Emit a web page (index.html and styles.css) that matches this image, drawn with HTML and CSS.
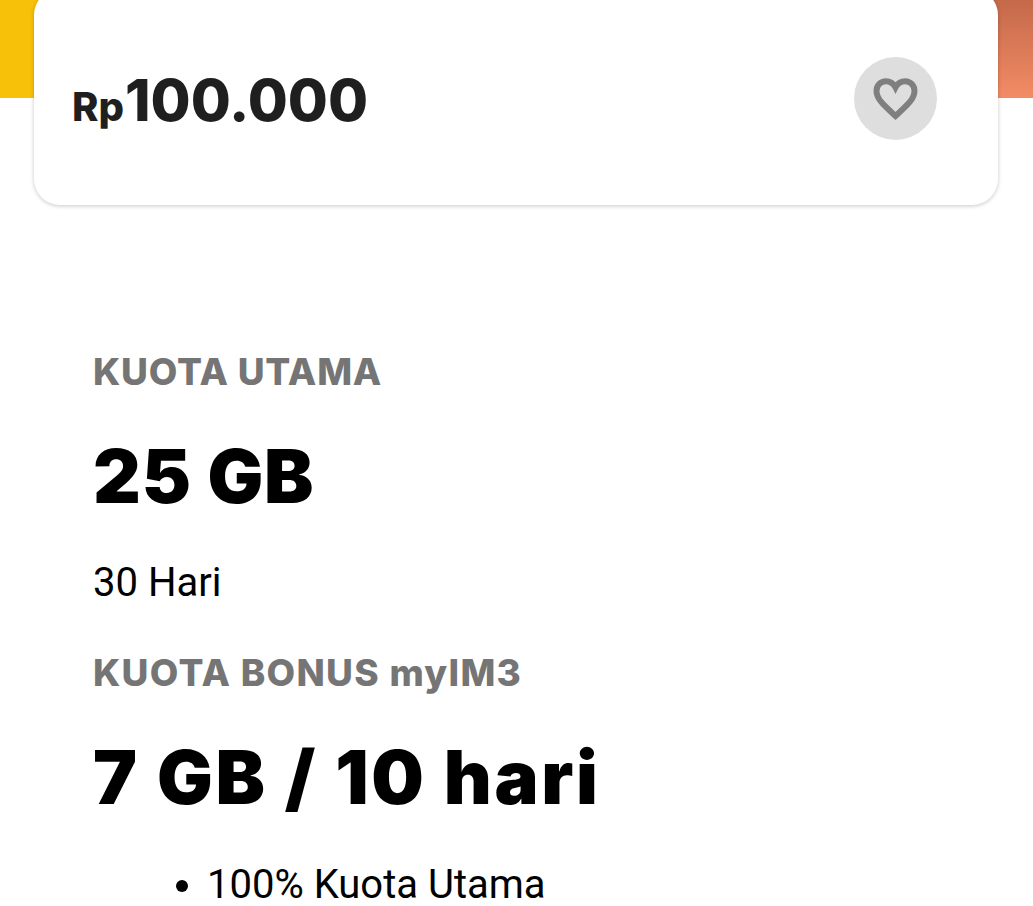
FILE: index.html
```html
<!DOCTYPE html>
<html lang="id">
<head>
<meta charset="utf-8">
<title>Paket 25 GB</title>
<link rel="stylesheet" href="styles.css">
</head>
<body>
<div class="page">
  <div class="hero"><div class="hero-yellow"></div><div class="hero-orange"></div></div>
  <section class="price-card">
    <div class="price"><span class="currency">Rp</span><span class="amount">100.000</span></div>
    <button class="fav" aria-label="Favorit">
      <svg viewBox="0 0 24 24" width="53" height="53" aria-hidden="true"><path fill="none" stroke="#7f7f7f" stroke-width="2.7" d="M12 19.9l-1-.9C6.3 14.7 3.4 12 3.4 8.6 3.4 6 5.4 4.2 7.6 4.2c1.8 0 3.5 1 4.4 2.8.9-1.8 2.6-2.8 4.4-2.8 2.2 0 4.2 1.8 4.2 4.4 0 3.4-2.9 6.1-7.6 10.4z"/></svg>
    </button>
  </section>
  <main class="details">
    <h2 class="label">KUOTA UTAMA</h2>
    <p class="value">25 GB</p>
    <p class="duration">30 Hari</p>
    <h2 class="label label-bonus">KUOTA BONUS myIM3</h2>
    <p class="value value-bonus">7 GB / 10 hari</p>
    <ul class="bullets">
      <li>100% Kuota Utama</li>
    </ul>
  </main>
</div>
</body>
</html>
```
FILE: styles.css
```css
html, body {
  margin: 0;
  height: 906px;
  overflow: hidden;
  background: #fff;
}
.page {
  font-family: "Inter", "Noto Sans", sans-serif;
  color: #000;
}
.hero {
  height: 98px;
  display: flex;
}
.hero-yellow {
  flex: 1;
  background: #f7c10a;
}
.hero-orange {
  flex: 1;
  background: linear-gradient(180deg, #c4694a, #f28c65);
}
.price-card {
  box-sizing: border-box;
  width: 964px;
  height: 216px;
  margin: -109px 0 0 34px;
  padding: 0 61px 0 38px;
  position: relative;
  display: flex;
  align-items: center;
  justify-content: space-between;
  background: #fff;
  border-radius: 26px;
  box-shadow: 0 1px 4px rgba(0, 0, 0, .22);
}
.price {
  display: flex;
  align-items: baseline;
  margin-top: 6px;
  color: #1f1f1f;
  font-weight: 800;
}
.currency { font-size: 40px; }
.amount { font-size: 58px; margin-left: 1px; }
.fav {
  width: 83px;
  height: 83px;
  margin-top: 2px;
  padding: 0;
  border: 0;
  border-radius: 50%;
  background: #dedede;
  display: flex;
  align-items: center;
  justify-content: center;
}
.details { padding: 143px 0 0 93px; }
.label {
  margin: 0;
  color: #757575;
  font-size: 37px;
  line-height: 48px;
  letter-spacing: .8px;
  font-weight: 800;
}
.value {
  margin: 38px 0 0;
  font-size: 74px;
  line-height: 84px;
  letter-spacing: .85px;
  font-weight: 900;
}
.duration {
  margin: 41px 0 0;
  font-family: "Roboto", sans-serif;
  font-size: 40px;
  line-height: 48px;
}
.label-bonus { margin-top: 42px; letter-spacing: 1.3px; }
.value-bonus { margin-top: 38px; letter-spacing: 2.6px; }
.bullets {
  margin: 42px 0 0;
  padding: 0 0 0 114px;
  font-family: "Roboto", sans-serif;
  font-size: 40px;
  line-height: 48px;
}
```
